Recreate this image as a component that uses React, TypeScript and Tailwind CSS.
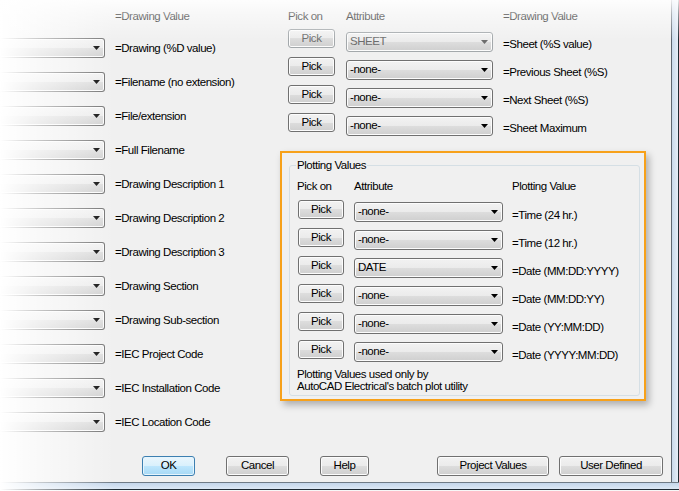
import React from "react";

const FONT = "font-['Liberation_Sans',Arial,sans-serif]";

const BTN_BG =
  "bg-[linear-gradient(#f2f2f2_0%,#ebebeb_50%,#dddddd_50%,#cfcfcf_100%)] shadow-[inset_0_0_0_1px_#fcfcfc]";

function Arrow({ dim = false }: { dim?: boolean }) {
  return (
    <svg width="7" height="4" viewBox="0 0 7 4" className="shrink-0">
      <path d="M0 0H7L3.5 4Z" fill={dim ? "#6d6d6d" : "#000"} />
    </svg>
  );
}

function Combo({
  text,
  width,
  disabled = false,
  className = "",
}: {
  text?: string;
  width: string;
  disabled?: boolean;
  className?: string;
}) {
  return (
    <div
      className={`flex h-[20px] items-center justify-between rounded-[3px] border pl-[3px] pr-[4px] ${BTN_BG} ${
        disabled ? "border-[#a3a8ab] text-[#6d6d6d]" : "border-[#707070] text-black"
      } ${width} ${className}`}
    >
      <span className="leading-none">{text}</span>
      <Arrow dim={disabled} />
    </div>
  );
}

function Btn({
  children,
  width,
  disabled = false,
  primary = false,
  className = "",
}: {
  children: React.ReactNode;
  width: string;
  disabled?: boolean;
  primary?: boolean;
  className?: string;
}) {
  const look = primary
    ? "border-[#3c7fb1] bg-[linear-gradient(#eaf6fd_0%,#d9f0fc_50%,#bee6fd_50%,#a7d9f5_100%)] shadow-[inset_0_0_0_1px_#e6f5fd] text-black"
    : disabled
    ? `border-[#a3a8ab] text-[#6d6d6d] ${BTN_BG}`
    : `border-[#707070] text-black ${BTN_BG}`;
  return (
    <button
      type="button"
      className={`flex items-center justify-center rounded-[3px] border leading-none ${look} ${width} ${className}`}
    >
      {children}
    </button>
  );
}

const leftRows = [
  "=Drawing (%D value)",
  "=Filename (no extension)",
  "=File/extension",
  "=Full Filename",
  "=Drawing Description 1",
  "=Drawing Description 2",
  "=Drawing Description 3",
  "=Drawing Section",
  "=Drawing Sub-section",
  "=IEC Project Code",
  "=IEC Installation Code",
  "=IEC Location Code",
];

const sheetRows = [
  { attr: "SHEET", label: "=Sheet (%S value)", disabled: true },
  { attr: "-none-", label: "=Previous Sheet (%S)" },
  { attr: "-none-", label: "=Next Sheet (%S)" },
  { attr: "-none-", label: "=Sheet Maximum" },
];

const plotRows = [
  { attr: "-none-", label: "=Time (24 hr.)" },
  { attr: "-none-", label: "=Time (12 hr.)" },
  { attr: "DATE", label: "=Date (MM:DD:YYYY)" },
  { attr: "-none-", label: "=Date (MM:DD:YY)" },
  { attr: "-none-", label: "=Date (YY:MM:DD)" },
  { attr: "-none-", label: "=Date (YYYY:MM:DD)" },
];

export default function App() {
  return (
    <div
      className={`relative flex h-[491px] w-[679px] flex-col overflow-hidden bg-[#f0f0f0] text-[11.5px] tracking-[-0.45px] text-black ${FONT}`}
    >
      <div className="flex h-[482px]">
        <div className="flex h-[482px] w-[671px] flex-col">
          <div className="flex h-[456px]">
            {/* left column */}
            <div className="w-[288px] shrink-0 pt-[9px]">
              <div className="pl-[115px] leading-[14px]">=Drawing Value</div>
              <div className="mt-[15px] flex flex-col gap-[14px]">
                {leftRows.map((l) => (
                  <div key={l} className="flex h-[20px] items-center">
                    <Combo width="w-[105px]" className="rounded-l-none border-l-0" />
                    <span className="ml-[10px] mt-[1px] whitespace-nowrap">{l}</span>
                  </div>
                ))}
              </div>
            </div>

            {/* right column */}
            <div className="flex-1 pt-[9px]">
              <div className="flex h-[14px] leading-[14px]">
                <span className="w-[58px]">Pick on</span>
                <span className="w-[157px]">Attribute</span>
                <span>=Drawing Value</span>
              </div>
              <div className="mt-[6px]">
                {sheetRows.map((r) => (
                  <div key={r.label} className="flex h-[28px] items-start">
                    <Btn width="w-[47px] h-[19px]" disabled={r.disabled}>
                      Pick
                    </Btn>
                    <Combo text={r.attr} width="w-[147px]" disabled={r.disabled} className="ml-[11px] mt-[3px]" />
                    <span className="ml-[10px] mt-[1px] whitespace-nowrap leading-[28px]">{r.label}</span>
                  </div>
                ))}
              </div>

              <div className="ml-[-8px] mt-[10px] h-[250px] w-[366px] border-2 border-[#f7a11a] shadow-[3px_4px_7px_rgba(0,0,0,0.28)]">
                <div className="relative ml-[7px] mt-[12px] h-[231px] w-[351px] rounded-[3px] border border-[#d5dfe5]">
                  <span className="absolute left-[6px] top-[-8px] bg-[#f0f0f0] px-[1px] leading-[14px]">Plotting Values</span>
                  <div className="mt-[13px] flex h-[14px] pl-[7px] leading-[14px]">
                    <span className="w-[57px]">Pick on</span>
                    <span className="w-[158px]">Attribute</span>
                    <span>Plotting Value</span>
                  </div>
                  <div className="mt-[7px]">
                    {plotRows.map((r) => (
                      <div key={r.label} className="flex h-[28px] items-start">
                        <Btn width="w-[46px] h-[19px]" className="ml-[8px]">
                          Pick
                        </Btn>
                        <Combo text={r.attr} width="w-[149px]" className="ml-[10px] mt-[2px]" />
                        <span className="ml-[9px] mt-[1px] whitespace-nowrap leading-[28px]">{r.label}</span>
                      </div>
                    ))}
                  </div>
                  <div className="pl-[7px] leading-[12px]">
                    <div>Plotting Values used only by</div>
                    <div>AutoCAD Electrical's batch plot utility</div>
                  </div>
                </div>
              </div>
            </div>
          </div>

          {/* dialog buttons */}
          <div className="flex h-[20px]">
            <Btn primary width="w-[53px] h-[20px]" className="ml-[142px]">
              OK
            </Btn>
            <Btn width="w-[63px] h-[20px]" className="ml-[31px]">
              Cancel
            </Btn>
            <Btn width="w-[49px] h-[20px]" className="ml-[31px]">
              Help
            </Btn>
            <Btn width="w-[112px] h-[20px]" className="ml-[68px]">
              Project Values
            </Btn>
            <Btn width="w-[104px] h-[20px]" className="ml-[10px]">
              User Defined
            </Btn>
          </div>
        </div>

        {/* right window frame */}
        <div className="h-[482px] w-[8px] border-x border-l-[#5d6670] border-r-[#1e2a33] bg-[linear-gradient(90deg,#c8d8ea,#e4edf7)]" />
      </div>

      {/* bottom window frame */}
      <div className="h-[9px] w-full border-t border-[#6f7b86] bg-[#f7f7f7]">
        <div className="h-[6px] bg-[linear-gradient(180deg,#c4d6eb,#dce8f5)]" />
        <div className="h-[1px] bg-[#1e2a33]" />
      </div>

      {/* fade over the screenshot edges */}
      <div className="pointer-events-none absolute inset-y-0 left-0 w-[115px] bg-[linear-gradient(90deg,rgba(255,255,255,1)_0%,rgba(255,255,255,0.6)_35%,rgba(255,255,255,0)_100%)]" />
      <div className="pointer-events-none absolute inset-x-0 top-0 h-[40px] bg-[linear-gradient(180deg,rgba(255,255,255,0.88)_0%,rgba(255,255,255,0.5)_35%,rgba(255,255,255,0)_100%)]" />
    </div>
  );
}
